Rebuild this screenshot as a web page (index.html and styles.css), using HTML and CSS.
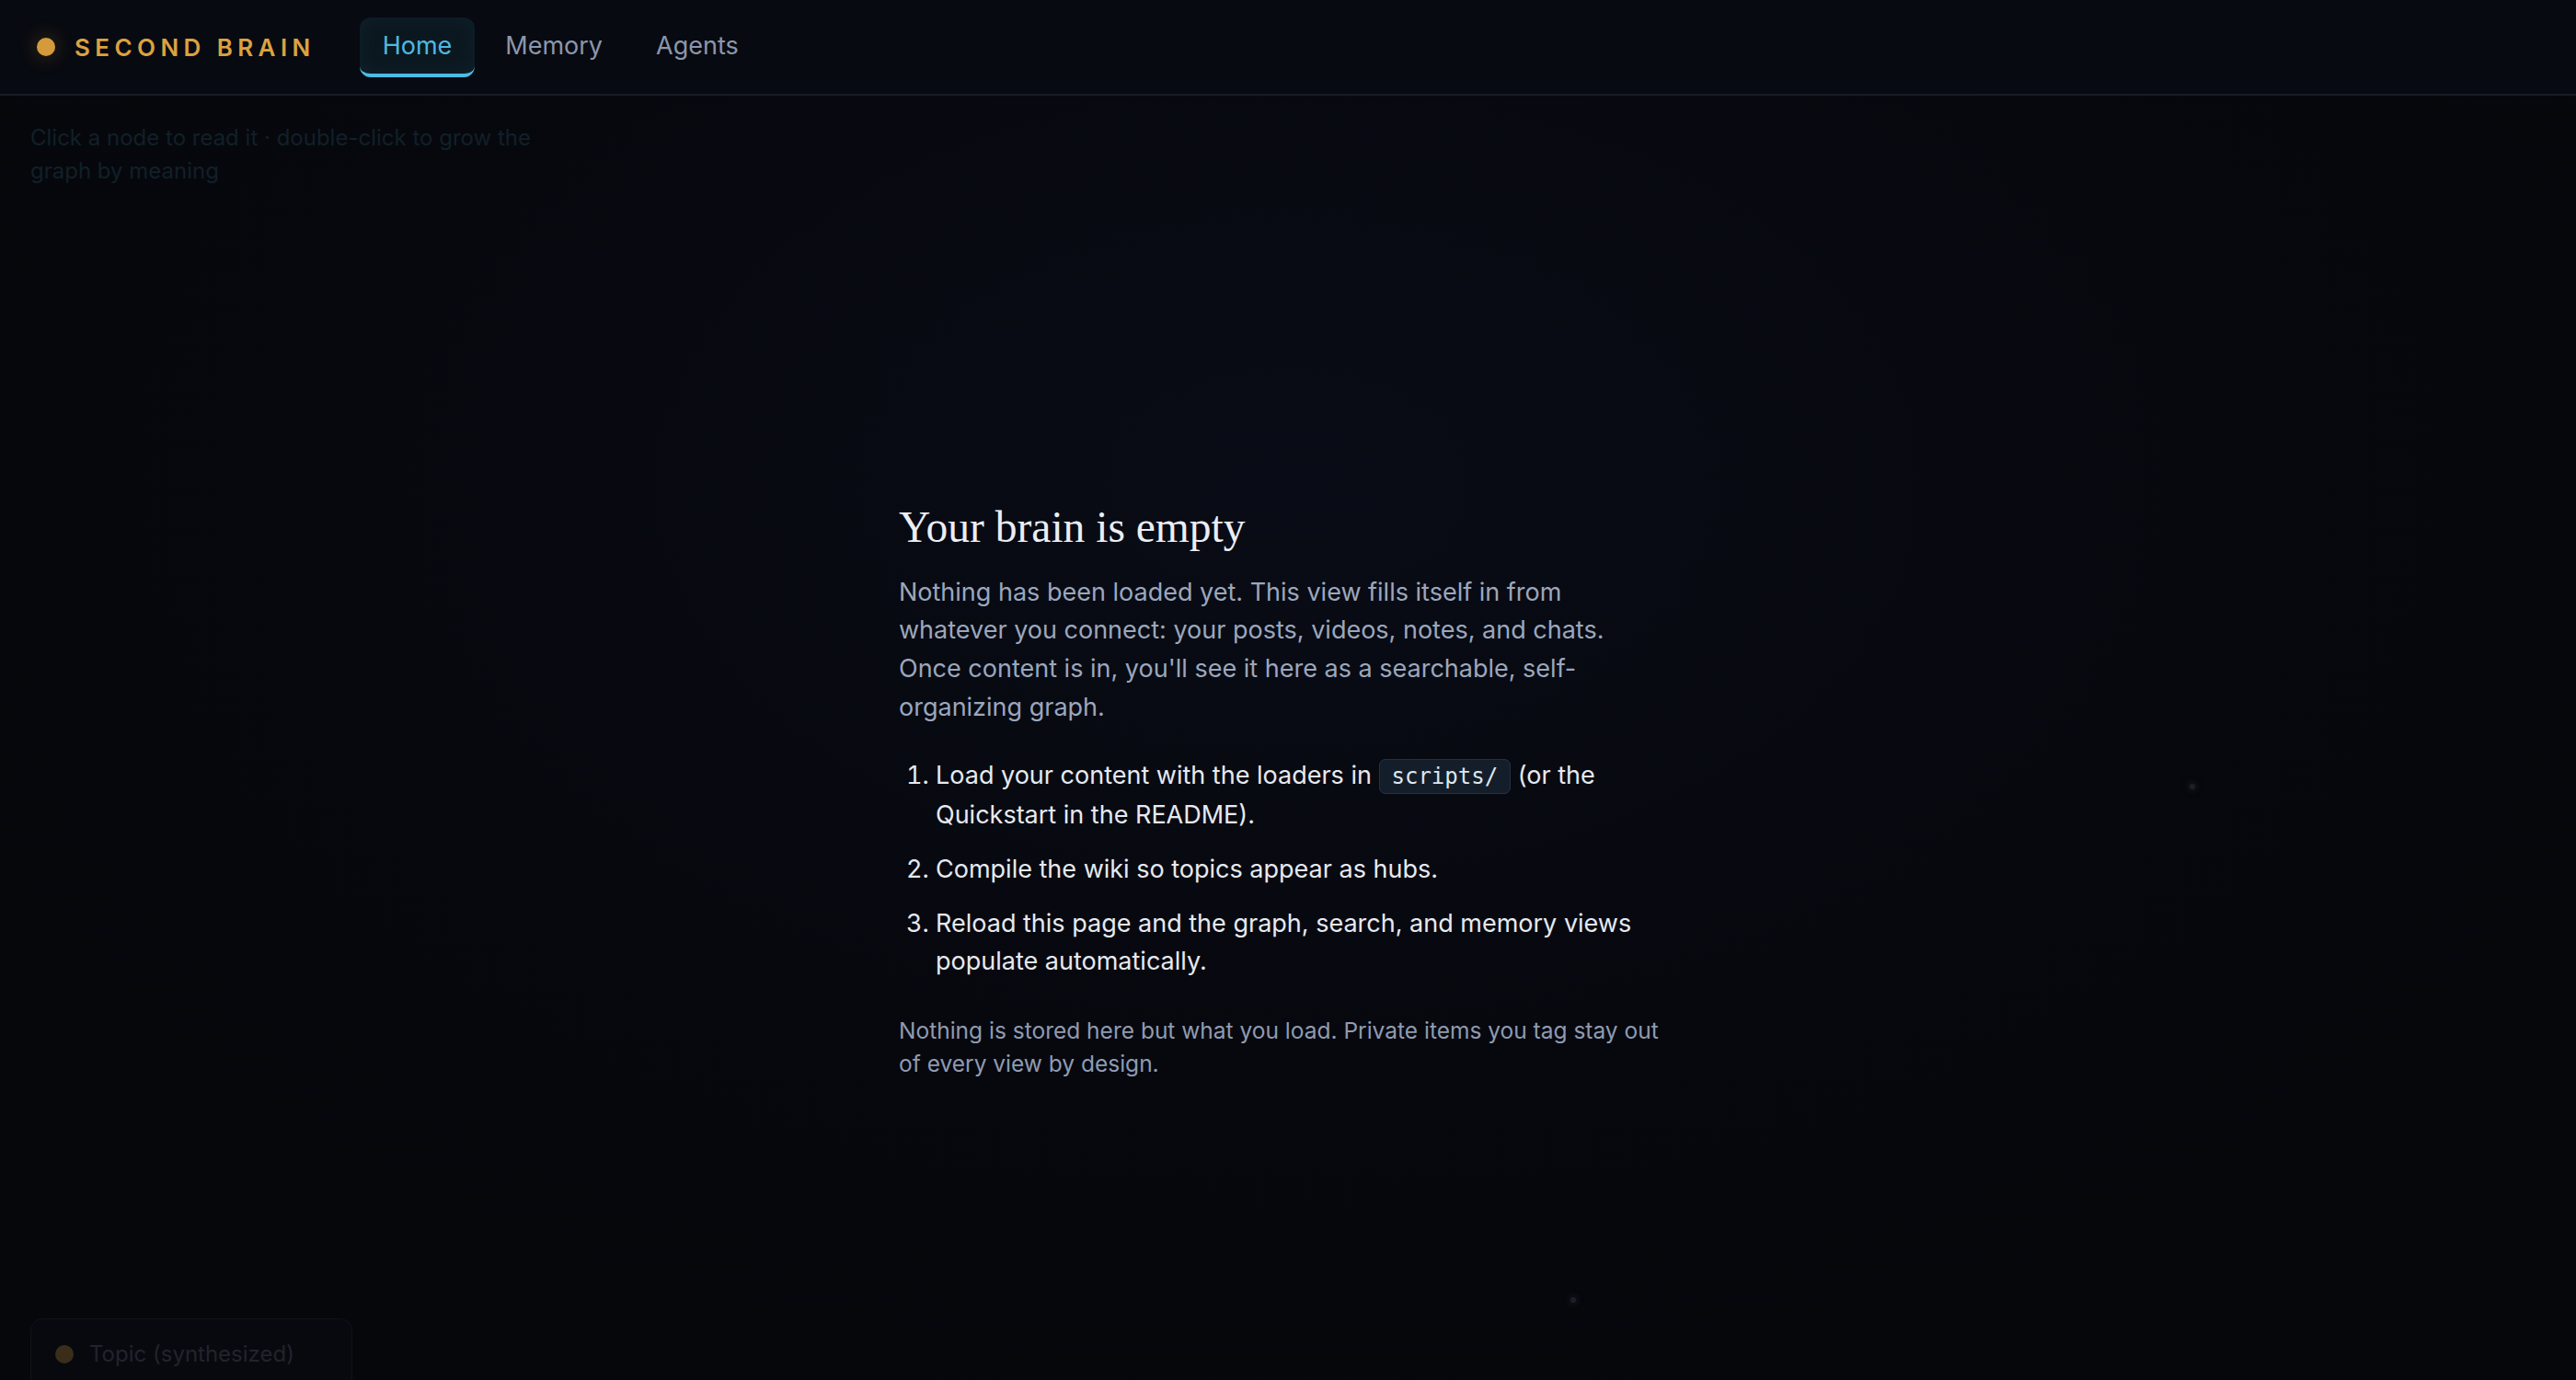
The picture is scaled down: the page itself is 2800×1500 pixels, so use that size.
FILE: index.html
```html
<!DOCTYPE html>
<html lang="en">
<head>
    <meta charset="UTF-8">
    <meta name="viewport" content="width=device-width, initial-scale=1.0">
    <title>Second Brain</title>
    <link rel="stylesheet" href="styles.css">
</head>
<body>
    <header class="topbar">
        <div class="brand">
            <span class="brand-dot"></span>
            <span class="brand-name">SECOND BRAIN</span>
        </div>
        <nav class="tabs">
            <a class="tab active" href="#">Home</a>
            <a class="tab" href="#">Memory</a>
            <a class="tab" href="#">Agents</a>
        </nav>
    </header>

    <main class="stage">
        <!-- graph canvas leftovers -->
        <span class="node" style="left: 2380px; top: 748px;"></span>
        <span class="node" style="left: 1707px; top: 1306px;"></span>

        <p class="hint">Click a node to read it · double-click to grow the graph by meaning</p>

        <section class="empty">
            <h2>Your brain is empty</h2>
            <p class="lead">Nothing has been loaded yet. This view fills itself in from whatever you connect: your posts, videos, notes, and chats. Once content is in, you'll see it here as a searchable, self-organizing graph.</p>
            <ol class="steps">
                <li>Load your content with the loaders in <code>scripts/</code> (or the Quickstart in the README).</li>
                <li>Compile the wiki so topics appear as hubs.</li>
                <li>Reload this page and the graph, search, and memory views populate automatically.</li>
            </ol>
            <p class="note">Nothing is stored here but what you load. Private items you tag stay out of every view by design.</p>
        </section>

        <div class="legend">
            <div class="legend-row"><span class="legend-dot topic"></span>Topic (synthesized)</div>
        </div>
    </main>
</body>
</html>
```

FILE: styles.css
```css
html, body {
    height: 100%;
}

body {
    margin: 0;
    padding: 0;
    font-family: Inter, "Noto Sans", sans-serif;
    background: radial-gradient(ellipse 60% 70% at 50% 35%, #090c16 0%, #07080e 60%, #06070b 100%);
    color: #e4e8ef;
    overflow: hidden;
}

.topbar {
    height: 102px;
    display: flex;
    align-items: center;
    padding: 0 40px;
    background: #080a11;
    border-bottom: 2px solid #161c25;
}

.brand {
    display: flex;
    align-items: center;
    gap: 21px;
}

.brand-dot {
    width: 20px;
    height: 20px;
    border-radius: 50%;
    background: #d49a3c;
    box-shadow: 0 0 18px 6px rgba(212, 154, 60, 0.12);
}

.brand-name {
    font-size: 26px;
    font-weight: 600;
    letter-spacing: 5.4px;
    color: #dba240;
}

.tabs {
    display: flex;
    gap: 8px;
    margin-left: 48px;
}

.tab {
    display: block;
    height: 61px;
    line-height: 61px;
    padding: 0 25px;
    font-size: 27px;
    color: #8b97ac;
    text-decoration: none;
    border-radius: 12px;
    border-bottom: 4px solid transparent;
}

.tab.active {
    color: #4db9e2;
    background: #0b1820;
    border-bottom-color: #4cbce4;
    box-shadow: inset 0 0 18px rgba(20, 40, 52, 0.6);
}

.stage {
    position: relative;
    box-sizing: border-box;
    height: calc(100% - 104px);
    padding-top: 115px;
    display: flex;
    justify-content: center;
    align-items: center;
}

.node {
    position: absolute;
    width: 6px;
    height: 6px;
    border-radius: 50%;
    background: #1b2028;
    box-shadow: 0 0 6px 2px rgba(27, 32, 40, 0.6);
}

.hint {
    position: absolute;
    left: 33px;
    top: 28px;
    margin: 0;
    max-width: 590px;
    font-size: 24px;
    line-height: 36px;
    color: #112029;
}

.empty {
    width: 838px;
    margin-right: 8px;
}

.empty h2 {
    margin: 0 0 22px;
    font-family: "Liberation Serif", serif;
    font-weight: 400;
    font-size: 47.5px;
    line-height: 56px;
    color: #eaeef5;
}

.lead {
    margin: 0 0 33px;
    font-size: 27px;
    line-height: 41.7px;
    color: #9ba7bd;
}

.steps {
    margin: 0 0 37px;
    padding-left: 40px;
    font-size: 27px;
    line-height: 41px;
    color: #e6e9f0;
}

.steps li + li {
    margin-top: 18px;
}

.steps code {
    font-family: "DejaVu Sans Mono", monospace;
    font-size: 24px;
    padding: 4px 13px;
    color: #dfe6ee;
    background: #141e2b;
    border: 1px solid #243143;
    border-radius: 7px;
}

.note {
    margin: 0;
    font-size: 24.5px;
    line-height: 36px;
    color: #8f9bb1;
}

.legend {
    position: absolute;
    left: 33px;
    top: 1329px;
    width: 350px;
    height: 90px;
    box-sizing: border-box;
    padding: 20px 26px;
    border: 1px solid #0e121a;
    border-bottom: none;
    border-radius: 14px 14px 0 0;
    background: rgba(9, 12, 20, 0.5);
}

.legend-row {
    display: flex;
    align-items: center;
    gap: 17px;
    font-size: 24px;
    line-height: 36px;
    color: #20242d;
    white-space: nowrap;
}

.legend-dot {
    width: 20px;
    height: 20px;
    border-radius: 50%;
}

.legend-dot.topic {
    background: #3a2e1b;
}
```
